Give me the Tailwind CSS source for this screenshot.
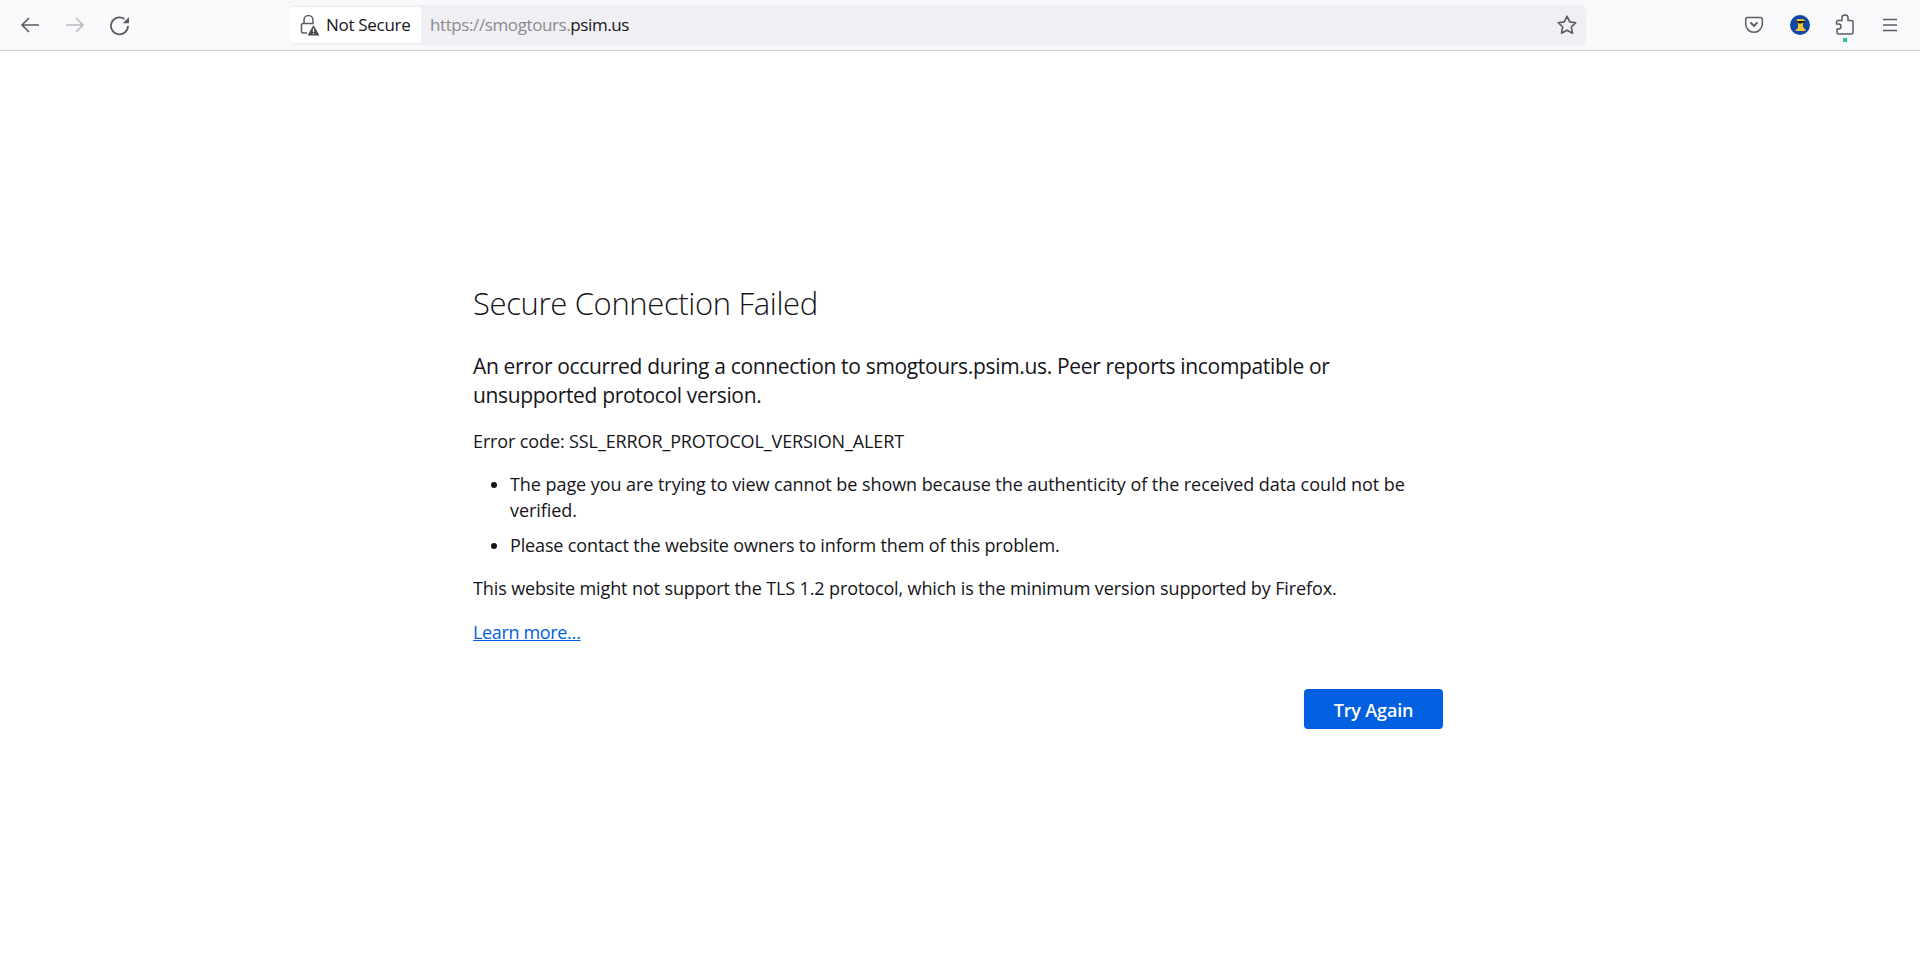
<!DOCTYPE html>
<html lang="en">
	<head>
		<meta charset="UTF-8" />
		<title>Server Not Found</title>
		<script src="https://cdn.jsdelivr.net/npm/@tailwindcss/browser@4"></script>
	</head>
	<body class="h-[957px] overflow-hidden bg-white font-['Open_Sans','Noto_Sans',sans-serif] text-[#15141a]">
		<!-- TOOLBAR -->
		<nav class="flex h-[51px] items-center border-b border-[#cfcfd8] bg-[#f9f9fb] pb-px">
			<div class="flex w-[290px] items-center pl-[19px] text-[#5b5b66]">
				<svg class="h-[22px] w-[22px]" viewBox="0 0 22 22" fill="none" stroke="currentColor" stroke-width="1.6"><path d="M20 11H3M10 4l-7 7 7 7" /></svg>
				<svg class="ml-[23px] h-[22px] w-[22px] text-[#b9b9c0]" viewBox="0 0 22 22" fill="none" stroke="currentColor" stroke-width="1.6"><path d="M2 11h17M12 4l7 7-7 7" /></svg>
				<svg class="ml-[23px] h-[22px] w-[22px]" viewBox="0 0 22 22" fill="none" stroke="currentColor" stroke-width="1.8">
					<path d="M15.5 5A8.5 8.5 0 1 0 19 12" />
					<path d="M20 3v6.200h-6.200z" fill="currentColor" stroke="none" />
				</svg>
			</div>
			<div class="flex h-10 w-[1296px] items-center rounded-[5px] bg-[#f0f0f4] pr-2">
				<div class="flex h-9 w-[131px] items-center rounded-[4px] bg-white pl-[10px]">
					<svg class="h-[22px] w-[20px] shrink-0" viewBox="0 0 20 22" fill="none">
						<path d="M4 9.500V6a4.500 4.500 0 0 1 9 0v3.500" stroke="#5b5b66" stroke-width="1.5" />
						<path d="M7 19H3a1.500 1.500 0 0 1-1.500-1.500V11a1.500 1.500 0 0 1 1.500-1.500h10.500" stroke="#5b5b66" stroke-width="1.5" />
						<path d="M13.500 11l6 10.500h-12z" fill="#4a4a52" />
						<path d="M13.500 14.500v3.500M13.500 19v1" stroke="#fff" stroke-width="1.2" />
					</svg>
					<span class="ml-[6px] whitespace-nowrap pt-px text-[17px] tracking-[-0.3px]">Not Secure</span>
				</div>
				<span class="ml-[9px] pt-px text-[17px] tracking-[-0.4px] text-[#8a8a90]">https://smogtours.<span class="text-[#15141a]">psim.us</span></span>
				<svg class="ml-auto h-[22px] w-[22px] text-[#5b5b66]" viewBox="0 0 22 22" fill="none" stroke="currentColor" stroke-width="1.6" stroke-linejoin="round"><path d="M11 2.200l2.700 5.700 6.100.8-4.500 4.300 1.200 6.200-5.500-3-5.500 3 1.200-6.200-4.500-4.300 6.100-.8z" /></svg>
			</div>
			<div class="ml-auto flex items-center pr-[20px] text-[#5b5b66]">
				<svg class="h-[20px] w-[20px]" viewBox="0 0 20 20" fill="none" stroke="currentColor" stroke-width="1.5"><path d="M3.500 2.500h13a1.800 1.800 0 0 1 1.800 1.800V9a8.300 8.300 0 0 1-16.600 0V4.300a1.800 1.800 0 0 1 1.800-1.800z" /><path d="M6.500 7.500L10 11l3.500-3.500" stroke-width="1.8" /></svg>
				<svg class="ml-[26px] h-[20px] w-[20px]" viewBox="0 0 20 20">
					<circle cx="10" cy="10" r="10" fill="#0f47a8" />
					<path d="M7 4l6.500.3 2 1.700-2.500 1.300v4.700l2.500 2.500v1.500H5.500V15l2.500-2V8.500L6.500 6.500z" fill="#f5c42c" />
					<path d="M6.500 6h8.500v1.500h-2.500l-1 1H9l-1-1H6.500z" fill="#1a1a1a" />
				</svg>
				<div class="relative ml-[25px] h-[22px] w-[20px]">
					<svg class="h-[22px] w-[20px]" viewBox="0 0 20 22" fill="none" stroke="currentColor" stroke-width="1.5" stroke-linejoin="round"><path d="M7 6.500V3.500a3 2.500 0 0 1 6 0v3h3.500a1.500 1.500 0 0 1 1.500 1.500v10.500a1.500 1.500 0 0 1-1.500 1.500H3.500a1.500 1.500 0 0 1-1.500-1.500V15h1.500a2.500 2.500 0 0 0 0-5H1.500V8A1.500 1.500 0 0 1 3 6.500z" /></svg>
					<span class="absolute left-[8px] top-[24px] h-1 w-1 bg-[#2ac3a2]"></span>
				</div>
				<svg class="ml-[25px] h-[20px] w-[20px]" viewBox="0 0 20 20" fill="none" stroke="currentColor" stroke-width="1.5"><path d="M3 4.500h14M3 10h14M3 15.500h14" /></svg>
			</div>
		</nav>
		<!-- ERROR PAGE -->
		<main class="ml-[473px] w-[970px] pt-[232px] text-[18px] leading-[26px] tracking-[-0.12px]">
			<h1 class="text-[31px] leading-[40px] font-light tracking-[-0.35px]">Secure Connection Failed</h1>
			<p class="mt-[29px] text-[21px] leading-[29px] tracking-[-0.33px]">An error occurred during a connection to smogtours.psim.us. Peer reports incompatible or unsupported protocol version.</p>
			<p class="mt-[18px]">Error code: SSL_ERROR_PROTOCOL_VERSION_ALERT</p>
			<ul class="mt-[17px] list-disc pl-[37px]">
				<li class="tracking-[-0.06px]">The page you are trying to view cannot be shown because the authenticity of the received data could not be verified.</li>
				<li class="mt-[9px] tracking-[-0.14px]">Please contact the website owners to inform them of this problem.</li>
			</ul>
			<p class="mt-[17px]">This website might not support the TLS 1.2 protocol, which is the minimum version supported by Firefox.</p>
			<a href="#" class="mt-[18px] block text-[#0060df] underline tracking-[-0.35px]">Learn more…</a>
			<div class="mt-[44px] flex justify-end">
				<button class="h-10 w-[139px] rounded-[4px] bg-[#0060df] pt-px text-[18px] font-semibold tracking-[-0.15px] text-white">Try Again</button>
			</div>
		</main>
	</body>
</html>
